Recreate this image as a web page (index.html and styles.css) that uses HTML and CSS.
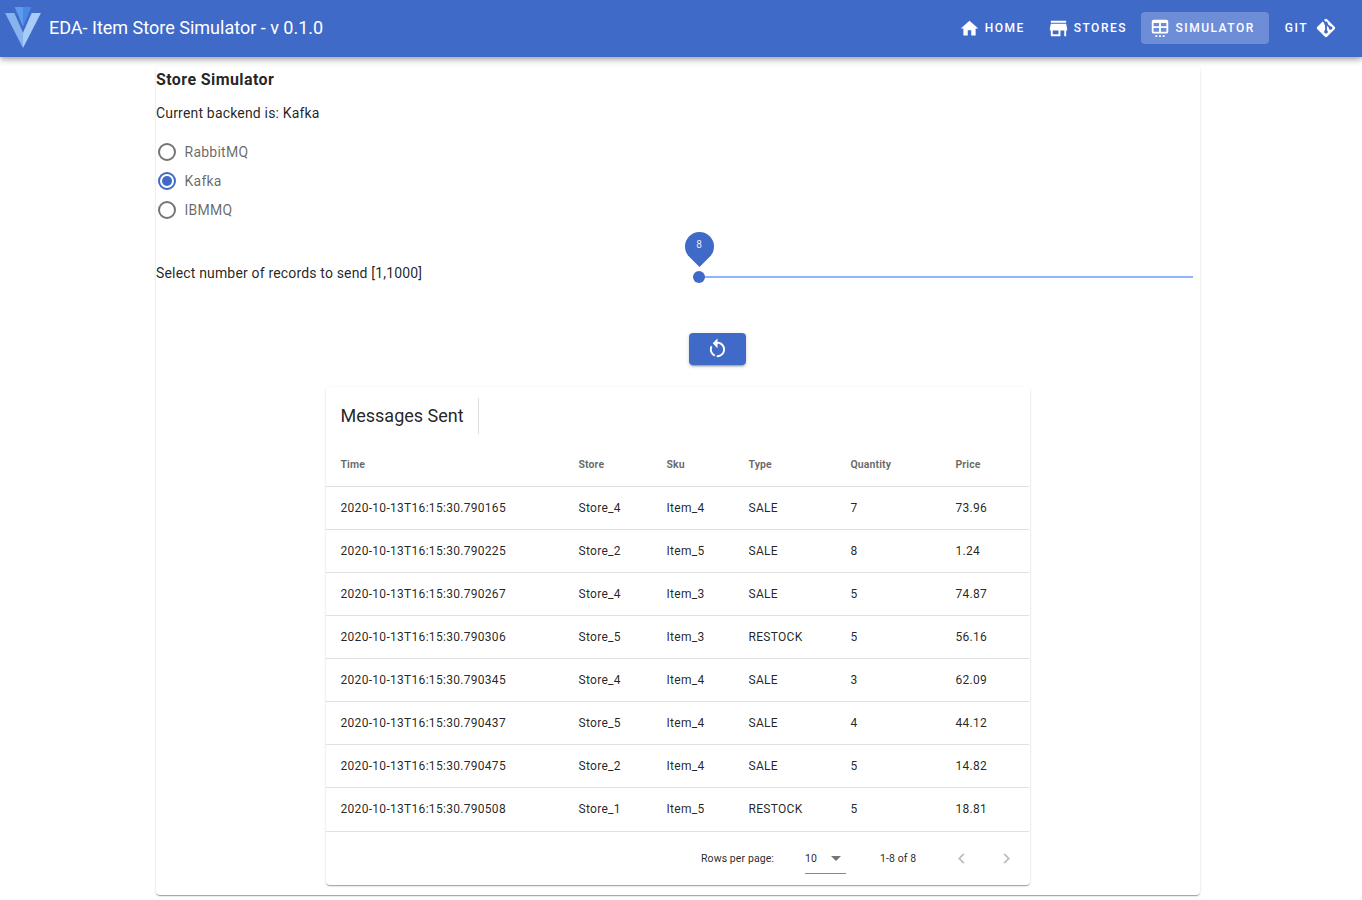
FILE: index.html
```html
<!DOCTYPE html>
<html lang="en">
<head>
<meta charset="utf-8">
<title>EDA- Item Store Simulator</title>
<link rel="stylesheet" href="styles.css">
</head>
<body>
<header class="appbar">
  <svg class="logo" viewBox="0 0 87.5 100" aria-hidden="true">
    <path d="M43.75 0H23.31L43.75 48.32Z" fill="#5b9bf0"/>
    <path d="M43.75 62.5V100L0 14.58H22.69Z" fill="#88b3ef"/>
    <path d="M43.75 0H64.19L43.75 48.32Z" fill="#4a88e8"/>
    <path d="M43.75 62.5V100L87.5 14.58H64.81Z" fill="#a8ccf8"/>
  </svg>
  <div class="apptitle">EDA- Item Store Simulator - v 0.1.0</div>
  <nav class="nav">
    <a class="navbtn homebtn"><svg class="navicon homeicon" viewBox="0 0 24 24"><path d="M10,20V14H14V20H19V12H22L12,3L2,12H5V20H10Z"/></svg>Home</a>
    <a class="navbtn storebtn"><svg class="navicon storeicon" viewBox="0 0 24 24"><path d="M12,18H6V14H12M21,14V12L20,7H4L3,12V14H4V20H14V14H18V20H20V14M20,4H4V6H20V4Z"/></svg>Stores</a>
    <a class="navbtn active"><svg class="navicon simicon" viewBox="0 0 24 24"><path d="M5,3H19A2,2 0 0,1 21,5V16A2,2 0 0,1 19,18H5A2,2 0 0,1 3,16V5A2,2 0 0,1 5,3ZM5,6.5V10H11V6.5ZM13,6.5V10H19V6.5ZM5,12V16H11V12ZM13,12V16H19V12ZM7,19.8H9V21.8H7ZM11,19.8H13V21.8H11ZM15,19.8H17V21.8H15Z" fill-rule="evenodd"/></svg>Simulator</a>
    <a class="navbtn gitbtn">Git<svg class="navicon giticon" viewBox="0 0 24 24"><path d="M2.6,10.59L8.38,4.8L10.07,6.5C9.83,7.35 10.22,8.28 11,8.73V14.27C10.4,14.61 10,15.26 10,16A2,2 0 0,0 12,18A2,2 0 0,0 14,16C14,15.26 13.6,14.61 13,14.27V9.41L15.07,11.5C15,11.65 15,11.82 15,12A2,2 0 0,0 17,14A2,2 0 0,0 19,12A2,2 0 0,0 17,10C16.82,10 16.65,10 16.5,10.07L13.93,7.5C14.19,6.57 13.71,5.55 12.78,5.16C12.35,5 11.9,4.96 11.5,5.07L9.8,3.38L10.59,2.6C11.37,1.81 12.63,1.81 13.41,2.6L21.4,10.59C22.19,11.37 22.19,12.63 21.4,13.41L13.41,21.4C12.63,22.19 11.37,22.19 10.59,21.4L2.6,13.41C1.81,12.63 1.81,11.37 2.6,10.59Z"/></svg></a>
  </nav>
</header>
<main class="main">
  <section class="card">
    <h1 class="cardtitle">Store Simulator</h1>
    <p class="backend">Current backend is: Kafka</p>
    <div class="radios">
      <div class="radio"><span class="radiomark"></span>RabbitMQ</div>
      <div class="radio on"><span class="radiomark"></span>Kafka</div>
      <div class="radio"><span class="radiomark"></span>IBMMQ</div>
    </div>
    <div class="sliderrow">
      <div class="sliderlabel">Select number of records to send [1,1000]</div>
      <div class="slider">
        <div class="track"></div>
        <div class="thumb"></div>
        <div class="pin"><span class="pinvalue">8</span></div>
      </div>
    </div>
    <div class="actions">
      <button class="runbtn" type="button"><svg class="runicon" viewBox="0 0 24 24"><path d="M12,4C14.1,4 16.1,4.8 17.6,6.3C20.7,9.4 20.7,14.5 17.6,17.6C15.8,19.5 13.3,20.2 10.9,19.9L11.4,17.9C13.1,18.1 14.9,17.5 16.2,16.2C18.5,13.9 18.5,10.1 16.2,7.7C15.1,6.6 13.5,6 12,6V10.6L7,5.6L12,0.6V4M6.3,17.6C3.7,15 3.3,11 5.1,7.9L6.6,9.4C5.5,11.6 5.9,14.4 7.8,16.2C8.3,16.7 8.9,17.1 9.6,17.4L9,19.4C8,19 7.1,18.4 6.3,17.6Z"/></svg></button>
    </div>
    <section class="tablecard">
      <div class="tabletop"><h2 class="tabletitle">Messages Sent</h2></div>
      <table class="table">
        <colgroup><col class="c1"><col class="c2"><col class="c3"><col class="c4"><col class="c5"><col class="c6"></colgroup>
        <thead><tr><th>Time</th><th>Store</th><th>Sku</th><th>Type</th><th>Quantity</th><th>Price</th></tr></thead>
        <tbody>
          <tr><td>2020-10-13T16:15:30.790165</td><td>Store_4</td><td>Item_4</td><td>SALE</td><td>7</td><td>73.96</td></tr>
          <tr><td>2020-10-13T16:15:30.790225</td><td>Store_2</td><td>Item_5</td><td>SALE</td><td>8</td><td>1.24</td></tr>
          <tr><td>2020-10-13T16:15:30.790267</td><td>Store_4</td><td>Item_3</td><td>SALE</td><td>5</td><td>74.87</td></tr>
          <tr><td>2020-10-13T16:15:30.790306</td><td>Store_5</td><td>Item_3</td><td>RESTOCK</td><td>5</td><td>56.16</td></tr>
          <tr><td>2020-10-13T16:15:30.790345</td><td>Store_4</td><td>Item_4</td><td>SALE</td><td>3</td><td>62.09</td></tr>
          <tr><td>2020-10-13T16:15:30.790437</td><td>Store_5</td><td>Item_4</td><td>SALE</td><td>4</td><td>44.12</td></tr>
          <tr><td>2020-10-13T16:15:30.790475</td><td>Store_2</td><td>Item_4</td><td>SALE</td><td>5</td><td>14.82</td></tr>
          <tr class="lastrow"><td>2020-10-13T16:15:30.790508</td><td>Store_1</td><td>Item_5</td><td>RESTOCK</td><td>5</td><td>18.81</td></tr>
        </tbody>
      </table>
      <div class="pager">
        <span class="rowslabel">Rows per page:</span>
        <div class="rowsselect"><span>10</span><span class="caret"></span></div>
        <span class="range">1-8 of 8</span>
        <svg class="pageicon prev" viewBox="0 0 24 24"><path d="M15.41,16.58L10.83,12L15.41,7.41L14,6L8,12L14,18L15.41,16.58Z"/></svg>
        <svg class="pageicon next" viewBox="0 0 24 24"><path d="M8.59,16.58L13.17,12L8.59,7.41L10,6L16,12L10,18L8.59,16.58Z"/></svg>
      </div>
    </section>
  </section>
</main>
</body>
</html>
```
FILE: styles.css
```css
* { box-sizing: border-box; }
html, body { margin: 0; padding: 0; }
body {
  font-family: Roboto, "Liberation Sans", sans-serif;
  color: rgba(0, 0, 0, 0.87);
  background: #fff;
  font-size: 14px;
  overflow: hidden;
  height: 900px;
}
.appbar {
  height: 57px;
  background: #3f6ac7;
  color: #fff;
  display: flex;
  align-items: center;
  padding: 0 16px 0 5px;
  box-shadow: 0 2px 4px -1px rgba(0,0,0,.2), 0 4px 5px 0 rgba(0,0,0,.14), 0 1px 10px 0 rgba(0,0,0,.12);
  position: relative;
  z-index: 2;
}
.logo { width: 36px; height: 41px; display: block; margin-top: -2px; flex: none; }
.apptitle { font-size: 18px; margin: -2px 0 0 8px; }
.nav { margin: -1px 0 0 auto; display: flex; align-items: center; }
.navbtn {
  display: flex;
  align-items: center;
  height: 32px;
  padding: 0 14px 0 8px;
  border-radius: 4px;
  font-size: 12px;
  font-weight: 500;
  letter-spacing: 1.5px;
  text-transform: uppercase;
  color: #fff;
}
.active { background: #6d8dd6; padding-left: 8.5px; }
.navicon { fill: #fff; flex: none; }
.homeicon { width: 21px; height: 21px; margin-right: 5px; }
.storeicon { width: 23px; height: 23px; margin-right: 4px; }
.simicon { width: 22px; height: 22px; margin-right: 4px; margin-top: -1px; }
.gitbtn { padding: 0 9px 0 16px; }
.giticon { width: 22px; height: 22px; margin-left: 7px; }
.main { padding: 10px 6px 0 0; }
.card {
  width: 1044px;
  height: 828px;
  margin: 0 auto;
  border-radius: 4px;
  background: #fff;
  box-shadow: 0 2px 1px -1px rgba(0,0,0,.2), 0 1px 1px 0 rgba(0,0,0,.14), 0 1px 3px 0 rgba(0,0,0,.12);
  display: flex;
  flex-direction: column;
}
.cardtitle { font-size: 16px; line-height: 24px; font-weight: 700; margin: 1px 0 0; letter-spacing: 0.4px; }
.backend { margin: 11px 0 0; font-size: 14px; line-height: 20px; letter-spacing: 0.18px; }
.radios { margin-top: 14px; display: flex; flex-direction: column; }
.radio {
  height: 29px;
  display: flex;
  align-items: center;
  color: rgba(0, 0, 0, 0.6);
  font-size: 14px;
  letter-spacing: 0.25px;
}
.radiomark {
  width: 18px;
  height: 18px;
  border: 2px solid #757575;
  border-radius: 50%;
  margin: 0 9px 0 1.5px;
  position: relative;
}
.on .radiomark { border-color: #3f6ac7; }
.on .radiomark::after {
  content: "";
  position: absolute;
  left: 2px;
  top: 2px;
  width: 10px;
  height: 10px;
  border-radius: 50%;
  background: #3f6ac7;
}
.sliderrow { display: flex; align-items: flex-start; height: 32px; margin-top: 42px; }
.sliderlabel { width: 537px; font-size: 14px; line-height: 20px; margin-top: -3px; letter-spacing: 0.17px; }
.slider { position: relative; flex: 1; height: 32px; margin-right: 7px; }
.track { position: absolute; left: 0; right: 0; top: 10px; height: 2px; background: #8eb4f9; }
.thumb { position: absolute; left: 0; top: 5px; width: 12px; height: 12px; border-radius: 50%; background: #3f6ac7; }
.pin {
  position: absolute;
  left: -8.5px;
  top: -34px;
  width: 29px;
  height: 29px;
  background: #3f6ac7;
  border-radius: 50% 50% 0;
  transform: rotate(45deg);
  display: flex;
  align-items: center;
  justify-content: center;
}
.pinvalue { transform: rotate(-45deg); color: #e4ebf8; font-size: 10px; margin: -3px 0 0 -3px; }
.actions { display: flex; justify-content: center; margin-top: 35px; padding-left: 79px; }
.runbtn {
  width: 57px;
  height: 32px;
  border: 0;
  border-radius: 4px;
  background: #3f6ac7;
  display: flex;
  align-items: center;
  justify-content: center;
  padding: 0;
  box-shadow: 0 3px 1px -2px rgba(0,0,0,.2), 0 2px 2px 0 rgba(0,0,0,.14), 0 1px 5px 0 rgba(0,0,0,.12);
}
.runicon { width: 23px; height: 23px; fill: #fff; }
.tablecard {
  width: 704px;
  height: 498px;
  margin: 22px 0 0 170px;
  border-radius: 4px;
  background: #fff;
  box-shadow: 0 2px 1px -1px rgba(0,0,0,.2), 0 1px 1px 0 rgba(0,0,0,.14), 0 1px 3px 0 rgba(0,0,0,.12);
}
.tabletop { height: 58px; padding: 11px 0 0 14.5px; display: flex; }
.tabletitle {
  font-size: 18px;
  font-weight: 400;
  margin: 0;
  height: 36px;
  line-height: 36px;
  padding-right: 14px;
  border-right: 1px solid rgba(0,0,0,.12);
}
.table { width: 703px; border-collapse: collapse; table-layout: fixed; }
.c1 { width: 238px; } .c2 { width: 88px; } .c3 { width: 82px; } .c4 { width: 102px; } .c5 { width: 105px; } .c6 { width: 88px; }
.table th {
  height: 41px;
  padding: 0 0 2px 14.5px;
  text-align: left;
  font-size: 10.5px;
  font-weight: 700;
  letter-spacing: 0.1px;
  color: rgba(0,0,0,.6);
  border-bottom: 1px solid rgba(0,0,0,.12);
}
.table td {
  height: 43px;
  padding: 0 0 0 14.5px;
  font-size: 12px;
  letter-spacing: 0.3px;
  border-bottom: 1px solid rgba(0,0,0,.12);
}
.table .lastrow td { height: 44px; }
.pager { display: flex; align-items: center; height: 53px; font-size: 10.5px; letter-spacing: 0.1px; }
.rowslabel { margin-left: 375px; }
.rowsselect {
  width: 41px;
  height: 30px;
  margin: 1px 0 0 31px;
  border-bottom: 1px solid #8a8a8a;
  display: flex;
  align-items: center;
  justify-content: space-between;
  padding: 0 5px 0 0;
}
.caret { width: 0; height: 0; border: 5.5px solid transparent; border-top-color: #757575; border-bottom: 0; }
.range { margin-left: 34px; }
.pageicon { width: 21px; height: 21px; fill: #bdbdbd; flex: none; }
.prev { margin-left: 35px; }
.next { margin-left: 24px; }
```
